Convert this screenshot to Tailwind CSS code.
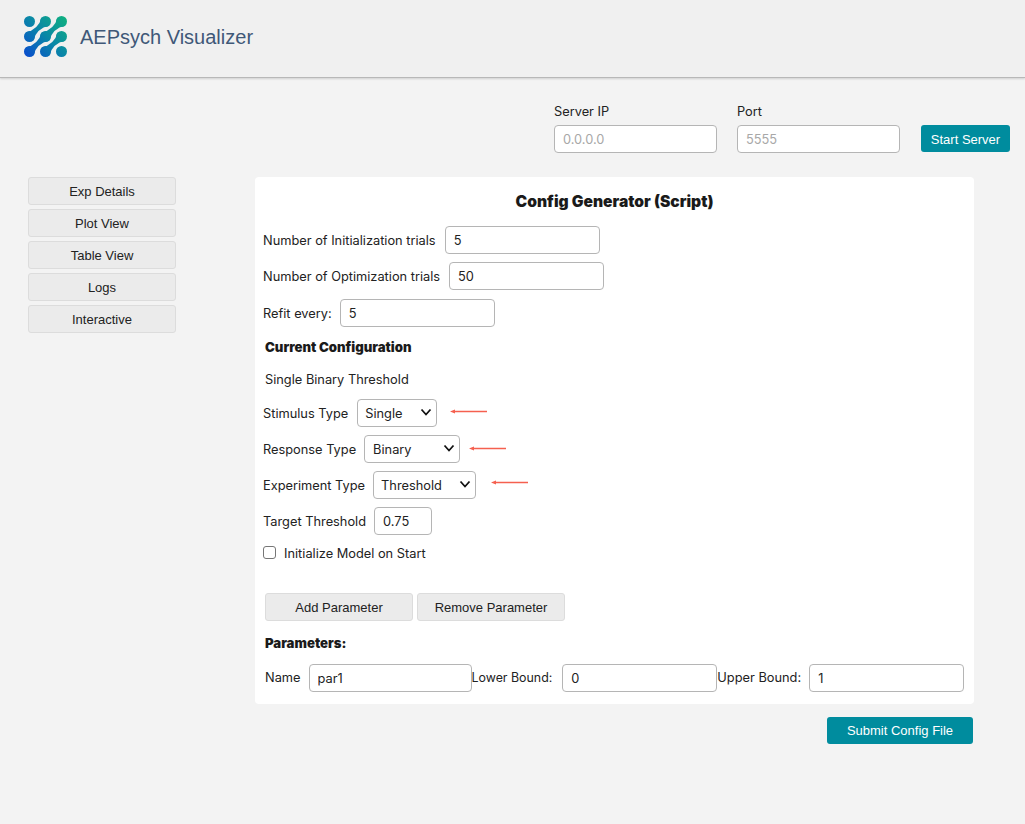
<!DOCTYPE html>
<html lang="en">
<head>
    <meta charset="UTF-8">
    <meta name="viewport" content="width=device-width, initial-scale=1.0">
    <title>AEPsych Visualizer</title>
    <script src="https://cdn.jsdelivr.net/npm/@tailwindcss/browser@4"></script>
</head>
<body class="h-[824px] overflow-hidden bg-[#f3f3f3] font-['Inter',sans-serif] text-[12.8px] text-[#222]">
    <!-- HEADER -->
    <header class="flex h-[78px] items-center border-b border-[#b8b8b8] bg-[#f0f0f0] pb-[3px] pl-[24px] shadow-[0_1px_2px_rgba(0,0,0,0.15)]">
        <svg class="block" width="44" height="42" viewBox="0 0 44 42" aria-hidden="true">
            <defs>
                <linearGradient id="logo-grad" gradientUnits="userSpaceOnUse" x1="0" y1="42" x2="44" y2="0">
                    <stop offset="0" stop-color="#0a48d0"/>
                    <stop offset="0.5" stop-color="#0a86a8"/>
                    <stop offset="1" stop-color="#10b47c"/>
                </linearGradient>
            </defs>
            <g fill="url(#logo-grad)">
                <circle cx="5.5" cy="5.5" r="5.5"/><circle cx="21.5" cy="5.5" r="5.5"/><circle cx="37.5" cy="5.5" r="5.5"/>
                <circle cx="5.5" cy="20.5" r="5.5"/><circle cx="21.5" cy="20.5" r="5.5"/><circle cx="37.5" cy="20.5" r="5.5"/>
                <circle cx="5.5" cy="35.5" r="5.5"/><circle cx="21.5" cy="35.5" r="5.5"/><circle cx="37.5" cy="35.5" r="5.5"/>
                <path d="M25.26 9.5Q12.8 12.27 9.26 24.5L1.74 16.5Q14.2 13.73 17.74 1.5Z"/>
                <path d="M41.26 9.5Q28.8 12.27 25.26 24.5L17.74 16.5Q30.2 13.73 33.74 1.5Z"/>
                <path d="M25.26 24.5Q12.8 27.27 9.26 39.5L1.74 31.5Q14.2 28.73 17.74 16.5Z"/>
                <path d="M41.26 24.5Q28.8 27.27 25.26 39.5L17.74 31.5Q30.2 28.73 33.74 16.5Z"/>
            </g>
        </svg>
        <span class="-mt-[1px] ml-[12px] font-['Liberation_Sans',sans-serif] text-[20px] text-[#3f5878]">AEPsych Visualizer</span>
    </header>

    <!-- SERVER -->
    <div class="flex h-[99px] items-start justify-end pr-[15px] pt-[25px]">
        <label class="mr-[20px] block w-[163px]">
            <span class="block h-[22px] pt-[1px] leading-[16px]">Server IP</span>
            <input class="block h-[28px] w-full rounded-[4px] border border-[#b5b5b5] bg-white px-[8px] placeholder:text-[#a8a8a8]" placeholder="0.0.0.0">
        </label>
        <label class="mr-[21px] block w-[163px]">
            <span class="block h-[22px] pt-[1px] leading-[16px]">Port</span>
            <input class="block h-[28px] w-full rounded-[4px] border border-[#b5b5b5] bg-white px-[8px] placeholder:text-[#a8a8a8]" placeholder="5555">
        </label>
        <button class="mt-[22px] h-[27px] w-[89px] rounded-[3px] bg-[#008c9e] pt-[2px] font-['Liberation_Sans',sans-serif] text-[13px] text-white">Start Server</button>
    </div>

    <div class="flex items-start">
        <!-- NAV -->
        <nav class="ml-[28px] flex w-[148px] flex-col gap-[4px] font-['Liberation_Sans',sans-serif] text-[13px]">
            <button class="h-[28px] rounded-[3px] border border-[#dcdcdc] bg-[#ebebeb] pt-[1px]">Exp Details</button>
            <button class="h-[28px] rounded-[3px] border border-[#dcdcdc] bg-[#ebebeb] pt-[1px]">Plot View</button>
            <button class="h-[28px] rounded-[3px] border border-[#dcdcdc] bg-[#ebebeb] pt-[1px]">Table View</button>
            <button class="h-[28px] rounded-[3px] border border-[#dcdcdc] bg-[#ebebeb] pt-[1px]">Logs</button>
            <button class="h-[28px] rounded-[3px] border border-[#dcdcdc] bg-[#ebebeb] pt-[1px]">Interactive</button>
        </nav>

        <div class="ml-[79px] w-[719px]">
            <!-- CONFIG CARD -->
            <div class="h-[527px] rounded-[4px] bg-white pl-[8px] pt-[15px]">
                <h1 class="-ml-[8px] h-[19px] text-center text-[15.6px] font-black leading-[19px] text-[#1a1a1a]">Config Generator (Script)</h1>
                <div class="mt-[15px] flex h-[28px] items-center gap-[9px]">
                    <span class="pt-[1px]">Number of Initialization trials</span>
                    <input class="h-[28px] w-[155px] rounded-[4px] border border-[#b5b5b5] px-[8px]" value="5">
                </div>
                <div class="mt-[8px] flex h-[28px] items-center gap-[9px]">
                    <span class="pt-[1px]">Number of Optimization trials</span>
                    <input class="h-[28px] w-[155px] rounded-[4px] border border-[#b5b5b5] px-[8px]" value="50">
                </div>
                <div class="mt-[9px] flex h-[28px] items-center gap-[8px]">
                    <span class="pt-[1px]">Refit every:</span>
                    <input class="h-[28px] w-[155px] rounded-[4px] border border-[#b5b5b5] px-[8px]" value="5">
                </div>
                <h2 class="ml-[2px] mt-[12px] h-[16px] text-[13.2px] font-black leading-[16px] text-[#1a1a1a]">Current Configuration</h2>
                <p class="ml-[2px] mt-[17px] h-[16px] leading-[16px]">Single Binary Threshold</p>

                <div class="mt-[11px] flex h-[28px] items-center gap-[9px]">
                    <span class="pt-[1px]">Stimulus Type</span>
                    <div class="relative">
                        <select class="block h-[28px] w-[80px] appearance-none rounded-[4px] border border-[#b5b5b5] bg-white pl-[7px] pr-[8px] pt-[1px]"><option>Single</option></select>
                        <svg class="absolute right-[5px] top-[9px]" width="12" height="9" viewBox="0 0 12 9" fill="none" stroke="#111" stroke-width="1.8"><path d="M1.5 1.5L6 6.5L10.5 1.5"/></svg>
                    </div>
                    <svg class="-mt-[4px] ml-[4px]" width="37" height="5" viewBox="0 0 37 5"><path d="M0 2.5L5 0.5V1.8H37V3.2H5V4.5Z" fill="#f5604f"/></svg>
                </div>
                <div class="mt-[8px] flex h-[28px] items-center gap-[8px]">
                    <span class="pt-[1px]">Response Type</span>
                    <div class="relative">
                        <select class="block h-[28px] w-[96px] appearance-none rounded-[4px] border border-[#b5b5b5] bg-white px-[8px] pt-[1px]"><option>Binary</option></select>
                        <svg class="absolute right-[5px] top-[9px]" width="12" height="9" viewBox="0 0 12 9" fill="none" stroke="#111" stroke-width="1.8"><path d="M1.5 1.5L6 6.5L10.5 1.5"/></svg>
                    </div>
                    <svg class="-mt-[2px] ml-[1px]" width="37" height="5" viewBox="0 0 37 5"><path d="M0 2.5L5 0.5V1.8H37V3.2H5V4.5Z" fill="#f5604f"/></svg>
                </div>
                <div class="mt-[8px] flex h-[28px] items-center gap-[8px]">
                    <span class="pt-[1px]">Experiment Type</span>
                    <div class="relative">
                        <select class="block h-[28px] w-[103px] appearance-none rounded-[4px] border border-[#b5b5b5] bg-white pl-[7px] pr-[8px] pt-[1px]"><option>Threshold</option></select>
                        <svg class="absolute right-[5px] top-[9px]" width="12" height="9" viewBox="0 0 12 9" fill="none" stroke="#111" stroke-width="1.8"><path d="M1.5 1.5L6 6.5L10.5 1.5"/></svg>
                    </div>
                    <svg class="-mt-[5px] ml-[7px]" width="37" height="5" viewBox="0 0 37 5"><path d="M0 2.5L5 0.5V1.8H37V3.2H5V4.5Z" fill="#f5604f"/></svg>
                </div>
                <div class="mt-[8px] flex h-[28px] items-center gap-[8px]">
                    <span class="pt-[1px]">Target Threshold</span>
                    <input class="h-[28px] w-[58px] rounded-[4px] border border-[#b5b5b5] px-[8px]" value="0.75">
                </div>
                <label class="mt-[10px] flex h-[16px] items-center gap-[8px]">
                    <span class="-mt-[2px] h-[13px] w-[13px] rounded-[3px] border border-[#767676] bg-white"></span>
                    <span class="pt-[1px]">Initialize Model on Start</span>
                </label>

                <div class="ml-[2px] mt-[32px] flex gap-[4px] font-['Liberation_Sans',sans-serif] text-[13px]">
                    <button class="h-[28px] w-[148px] rounded-[3px] border border-[#dcdcdc] bg-[#ebebeb] pt-[1px]">Add Parameter</button>
                    <button class="h-[28px] w-[148px] rounded-[3px] border border-[#dcdcdc] bg-[#ebebeb] pt-[1px]">Remove Parameter</button>
                </div>
                <h2 class="ml-[2px] mt-[14px] h-[16px] text-[13.2px] font-black leading-[16px] text-[#1a1a1a]">Parameters:</h2>
                <div class="ml-[2px] mt-[13px] flex h-[28px] items-center">
                    <span class="mr-[8px]">Name</span>
                    <input class="h-[28px] w-[163px] rounded-[4px] border border-[#b5b5b5] px-[8px]" value="par1">
                    <span class="mr-[10px] text-[12.4px]">Lower Bound:</span>
                    <input class="h-[28px] w-[155px] rounded-[4px] border border-[#b5b5b5] px-[8px]" value="0">
                    <span class="mr-[8px]">Upper Bound:</span>
                    <input class="h-[28px] w-[155px] rounded-[4px] border border-[#b5b5b5] px-[8px]" value="1">
                </div>
            </div>
            <div class="mr-[1px] mt-[13px] flex justify-end">
                <button class="h-[27px] w-[146px] rounded-[3px] bg-[#008c9e] pt-[1px] font-['Liberation_Sans',sans-serif] text-[13px] text-white">Submit Config File</button>
            </div>
        </div>
    </div>
</body>
</html>
